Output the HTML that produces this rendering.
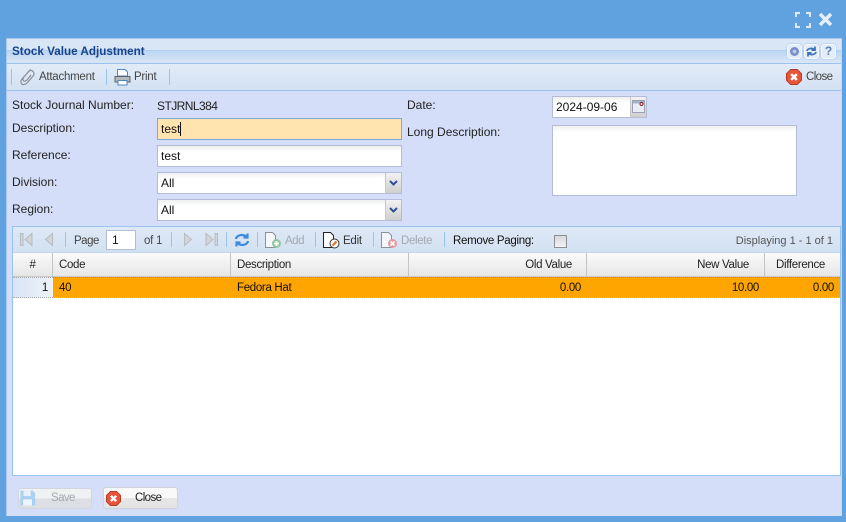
<!DOCTYPE html>
<html><head><meta charset="utf-8">
<style>
html,body{margin:0;padding:0;width:846px;height:522px;overflow:hidden;background:#5fa2df;font-family:"Liberation Sans",sans-serif;font-size:12px;color:#222}
div,span,svg{position:absolute;box-sizing:border-box}
.t{white-space:nowrap;line-height:14px}
.sep{width:1px;background:#99c4ee;border-right:0}
.in{border:1px solid #b5bdd6;background:linear-gradient(#eef0f0,#fff 6px);height:21px;line-height:20px;padding-left:3px;white-space:nowrap;color:#111}
.dd{width:17px;height:21px;background:linear-gradient(#f2f2f2,#cfcfcf);border:1px solid #b5bdd6;border-left:1px solid #c8c8c8}
.hd{top:253px;height:24px;background:linear-gradient(#fbfbfb,#e6e6e6);border-bottom:1px solid #c9c9c9;border-right:1px solid #c4c4c4;line-height:25px;white-space:nowrap;color:#222;font-size:11.5px;letter-spacing:-.32px}
.c{top:277px;height:21px;line-height:22px;white-space:nowrap;color:#111;font-size:11.5px;letter-spacing:-.32px}
.g{color:#a3a9b2}
.b{width:15px;height:15px;top:44px;background:#e3ecf9;border:1px solid #f7fafd;border-radius:3px;box-shadow:0 0 0 .5px #a9c8ed}
.s{font-size:11.5px;letter-spacing:-.25px}
</style></head><body>
<!-- window controls -->
<svg style="left:795px;top:12px" width="16" height="16" viewBox="0 0 16 16" fill="none" stroke="#dfeaf6" stroke-width="2"><path d="M1 5V1H5M11 1H15V5M15 11V15H11M5 15H1V11"/></svg>
<svg style="left:818px;top:12px" width="15" height="15" viewBox="0 0 15 15" fill="none" stroke="#e6eff9" stroke-width="3.4"><path d="M2 2L13 13M13 2L2 13"/></svg>

<!-- panel -->
<div style="left:6px;top:38px;width:836px;height:478px;background:#d5def8;border:1px solid #a9c8ed;border-right:1px solid #c5d8f2;border-bottom:0"></div>

<!-- title -->
<div style="left:7px;top:39px;width:834px;height:25px;background:linear-gradient(#d9e6f6 0,#d9e6f6 11px,#a9c9ef 11px,#bcd5f2 12px,#dae7f6 24px);border-bottom:1px solid #9cc1ec"></div>
<div class="t" style="left:12px;top:45px;font-weight:bold;font-size:11.7px;color:#15428b">Stock Value Adjustment</div>
<div class="b" style="left:787px"></div>
<svg style="left:789px;top:46px" width="11" height="11" viewBox="0 0 11 11"><circle cx="5.500" cy="5.500" r="4.500" fill="#7d8fcb"/><circle cx="5.500" cy="5.500" r="1.800" fill="#c0cbea"/></svg>
<div class="b" style="left:804px"></div>
<svg style="left:806px;top:46px" width="11" height="11" viewBox="0 0 11 11" fill="none" stroke="#3f72b4" stroke-width="1.700"><path d="M1 5C1.500 2.500 6 1.500 8.500 3.500M9 .5V4.200H5.500M10 6C9.500 8.500 5 9.500 2.500 7.500M2 10.500V6.800H5.500"/></svg>
<div class="b" style="left:821px;text-align:center;font-weight:bold;font-size:12px;line-height:13px;color:#5a80b8">?</div>

<!-- toolbar -->
<div style="left:7px;top:64px;width:834px;height:27px;background:linear-gradient(#e2ecf8,#d3e1f2);border-bottom:1px solid #9cc1ec"></div>
<div class="sep" style="left:11px;top:69px;height:16px"></div>
<svg style="left:19px;top:68px" width="16" height="18" viewBox="0 0 16 18" fill="none" stroke="#8a8f96" stroke-width="1.200"><path d="M11.500 1.500L3 11C1 13.500 2 16 4 16.500C6 17 7.500 15.500 8.500 14.500L14.500 7.500C15.500 6 15 4 13.500 3C12 2 10.500 2.500 9.500 3.500L4.500 9.500C3.500 11 4 12.500 5 13C6 13.500 7 13 8 12L12 7"/></svg>
<div class="t s" style="left:39px;top:70px;color:#444">Attachment</div>
<div class="sep" style="left:106px;top:69px;height:16px"></div>
<svg style="left:114px;top:68px" width="17" height="18" viewBox="0 0 17 18"><path d="M3.500 1.500H11L13.500 4V8H3.500Z" fill="#fff" stroke="#4f86c6"/><path d="M1 8.500H16V14H1Z" fill="#b4b8bf" stroke="#60646a"/><path d="M4 12.500H13V17H4Z" fill="#fff" stroke="#4f86c6"/></svg>
<div class="t s" style="left:134px;top:70px;color:#444">Print</div>
<div class="sep" style="left:169px;top:69px;height:16px"></div>
<svg style="left:786px;top:69px" width="16" height="16" viewBox="0 0 17 17"><path d="M5 .5H12L16.500 5V12L12 16.500H5L.5 12V5Z" fill="#e8543a" stroke="#b03a25"/><path d="M5.500 5.500L11.500 11.500M11.500 5.500L5.500 11.500" stroke="#fff" stroke-width="2.600"/></svg>
<div class="t s" style="left:806px;top:70px;color:#444;letter-spacing:-.6px">Close</div>

<!-- form -->
<div class="t" style="left:12px;top:98px">Stock Journal Number:</div>
<div class="t" style="left:157px;top:99px;letter-spacing:-.55px">STJRNL384</div>
<div class="t" style="left:12px;top:121px">Description:</div>
<div class="t" style="left:12px;top:148px">Reference:</div>
<div class="t" style="left:12px;top:175px">Division:</div>
<div class="t" style="left:12px;top:202px">Region:</div>
<div class="t" style="left:407px;top:98px">Date:</div>
<div class="t" style="left:407px;top:125px">Long Description:</div>

<div class="in" style="left:157px;top:118px;width:245px;height:22px;background:#ffe4b0;border-color:#7fa9d9">test</div>
<div style="left:180px;top:122px;width:1px;height:14px;background:#111"></div>
<div class="in" style="left:157px;top:145px;width:245px;height:22px">test</div>
<div class="in" style="left:157px;top:172px;width:245px;height:22px">All</div>
<div class="dd" style="left:385px;top:172px;height:22px"></div>
<svg style="left:389px;top:180px" width="9" height="6" viewBox="0 0 9 6" fill="none" stroke="#2f4f96" stroke-width="2"><path d="M1 1L4.500 4.500L8 1"/></svg>
<div class="in" style="left:157px;top:199px;width:245px;height:22px">All</div>
<div class="dd" style="left:385px;top:199px;height:22px"></div>
<svg style="left:389px;top:207px" width="9" height="6" viewBox="0 0 9 6" fill="none" stroke="#2f4f96" stroke-width="2"><path d="M1 1L4.500 4.500L8 1"/></svg>

<div class="in" style="left:552px;top:96px;width:79px;height:22px">2024-09-06</div>
<div class="dd" style="left:630px;top:96px;height:22px"></div>
<svg style="left:632px;top:100px" width="13" height="13" viewBox="0 0 13 13"><rect x=".5" y=".5" width="12" height="12" fill="#e9edf5" stroke="#9aa3b4"/><rect x="1" y="1" width="11" height="2.500" fill="#a3b1ca"/><circle cx="9.500" cy="4" r="1.500" fill="#fff" stroke="#a01525"/></svg>
<div class="in" style="left:552px;top:125px;width:245px;height:71px"></div>

<!-- grid -->
<div style="left:12px;top:226px;width:829px;height:250px;background:#fff;border:1px solid #99c4ee;border-top:1px solid #9cc4ee"></div>
<div style="left:13px;top:227px;width:827px;height:26px;background:linear-gradient(#dfe9f6,#d2e1f2);border-bottom:1px solid #c5d6ea"></div>

<svg style="left:20px;top:232px" width="13" height="15" viewBox="0 0 13 15" fill="#d0d5da" stroke="#b7bcc2"><rect x=".5" y="1.500" width="2.500" height="12"/><path d="M12 1.500V13.500L5 7.500Z"/></svg>
<svg style="left:44px;top:232px" width="10" height="15" viewBox="0 0 10 15" fill="#d0d5da" stroke="#b7bcc2"><path d="M8.500 1.500V13.500L1.500 7.500Z"/></svg>
<div class="sep" style="left:65px;top:232px;height:15px"></div>
<div class="t s" style="left:74px;top:234px;color:#444;letter-spacing:-.5px">Page</div>
<div style="left:106px;top:230px;width:30px;height:20px;background:#fff;border:1px solid #b5bdd6;line-height:19px;padding-left:5px;font-size:12px;color:#111">1</div>
<div class="t s" style="left:144px;top:234px;color:#444">of 1</div>
<div class="sep" style="left:171px;top:232px;height:15px"></div>
<svg style="left:183px;top:232px" width="10" height="15" viewBox="0 0 10 15" fill="#d0d5da" stroke="#b7bcc2"><path d="M1.500 1.500V13.500L8.500 7.500Z"/></svg>
<svg style="left:205px;top:232px" width="13" height="15" viewBox="0 0 13 15" fill="#d0d5da" stroke="#b7bcc2"><path d="M1 1.500V13.500L8 7.500Z"/><rect x="10" y="1.500" width="2.500" height="12"/></svg>
<div class="sep" style="left:226px;top:232px;height:15px"></div>
<svg style="left:234px;top:232px" width="16" height="16" viewBox="0 0 16 16" fill="none" stroke="#3c8ae0" stroke-width="2.200"><path d="M2 7C2.500 3.500 8 1.500 12.500 4.500M13.500 1.500V5.500H9.500M14 9C13.500 12.500 8 14.500 3.500 11.500M2.500 14.500V10.500H6.500"/></svg>
<div class="sep" style="left:257px;top:232px;height:15px"></div>
<svg style="left:264px;top:231px" width="18" height="18" viewBox="0 0 18 18"><path d="M1.500 1.500H8.500L11.500 4.500V16.500H1.500Z" fill="#f4f7fb" stroke="#8d9198"/><circle cx="12.500" cy="12.500" r="4.500" fill="#90c8a0"/><path d="M12.500 10V15M10 12.500H15" stroke="#fff" stroke-width="1.800"/></svg>
<div class="t s g" style="left:285px;top:234px;letter-spacing:-.5px">Add</div>
<div class="sep" style="left:315px;top:232px;height:15px"></div>
<svg style="left:322px;top:231px" width="18" height="18" viewBox="0 0 18 18"><path d="M1.500 1.500H8.500L11.500 4.500V16.500H1.500Z" fill="#fff" stroke="#222"/><circle cx="12.500" cy="12.500" r="4.500" fill="#fff" stroke="#333"/><path d="M10.500 14.500L14.500 10.500" stroke="#e0701f" stroke-width="2"/></svg>
<div class="t s" style="left:343px;top:234px;color:#333">Edit</div>
<div class="sep" style="left:373px;top:232px;height:15px"></div>
<svg style="left:380px;top:231px" width="18" height="18" viewBox="0 0 18 18"><path d="M1.500 1.500H8.500L11.500 4.500V16.500H1.500Z" fill="#f4f7fb" stroke="#8d9198"/><circle cx="12.500" cy="12.500" r="4.500" fill="#e59aa0"/><path d="M10.500 10.500L14.500 14.500M14.500 10.500L10.500 14.500" stroke="#fff" stroke-width="1.600"/></svg>
<div class="t s g" style="left:401px;top:234px;letter-spacing:-.35px">Delete</div>
<div class="sep" style="left:444px;top:232px;height:15px"></div>
<div class="t s" style="left:453px;top:234px;color:#111;letter-spacing:-.3px">Remove Paging:</div>
<div style="left:554px;top:235px;width:13px;height:13px;background:linear-gradient(#d5d8de,#f2f3f5);border:1px solid #8d8f93"></div>
<div class="t" style="right:13px;top:234px;color:#555;font-size:11px">Displaying 1 - 1 of 1</div>

<div class="hd" style="left:13px;width:40px;text-align:center">#</div>
<div class="hd" style="left:53px;width:178px;padding-left:6px">Code</div>
<div class="hd" style="left:231px;width:178px;padding-left:6px">Description</div>
<div class="hd" style="left:409px;width:178px;text-align:right;padding-right:14px">Old Value</div>
<div class="hd" style="left:587px;width:178px;text-align:right;padding-right:15px">New Value</div>
<div class="hd" style="left:765px;width:75px;border-right:0;text-align:right;padding-right:15px">Difference</div>

<div class="c" style="left:13px;width:40px;background:linear-gradient(90deg,#d8e4f5,#eef3fa);text-align:right;padding-right:5px;border-top:1px dotted #aaa;border-bottom:1px dotted #aaa;line-height:20px">1</div>
<div style="left:53px;top:277px;width:787px;height:21px;background:#ffa500;border-top:1px dotted #c98a10;border-bottom:1px dotted #ccc"></div>
<div class="c" style="left:59px">40</div>
<div class="c" style="left:237px">Fedora Hat</div>
<div class="c" style="left:409px;width:172px;text-align:right">0.00</div>
<div class="c" style="left:587px;width:172px;text-align:right">10.00</div>
<div class="c" style="left:765px;width:69px;text-align:right">0.00</div>

<!-- footer -->
<div style="left:18px;top:488px;width:74px;height:21px;background:linear-gradient(#f0f1f3 0,#f0f1f3 50%,#dcdfe3 50%,#dcdfe3);border:1px solid #d2d6df;border-radius:3px"></div>
<svg style="left:20px;top:490px" width="16" height="16" viewBox="0 0 18 17" preserveAspectRatio="none"><path d="M.5 .5H14L17 3.500V16.500H.5Z" fill="#a9d1f3"/><rect x="4" y=".5" width="8" height="6" fill="#e6f1fb"/><rect x="3.500" y="10" width="10" height="6.500" fill="#eef6fc"/></svg>
<div class="t s g" style="left:51px;top:491px;letter-spacing:-.6px">Save</div>
<div style="left:103px;top:487px;width:75px;height:22px;background:linear-gradient(#f9f9f9 0,#f9f9f9 50%,#e6e6e6 50%,#e4e4e4);border:1px solid #cfd3da;border-radius:3px"></div>
<svg style="left:106px;top:491px" width="15" height="15" viewBox="0 0 17 17"><path d="M5 .5H12L16.500 5V12L12 16.500H5L.5 12V5Z" fill="#e8543a" stroke="#b03a25"/><path d="M5.500 5.500L11.500 11.500M11.500 5.500L5.500 11.500" stroke="#fff" stroke-width="2.600"/></svg>
<div class="t s" style="left:135px;top:491px;color:#222;letter-spacing:-.6px">Close</div>
</body></html>
